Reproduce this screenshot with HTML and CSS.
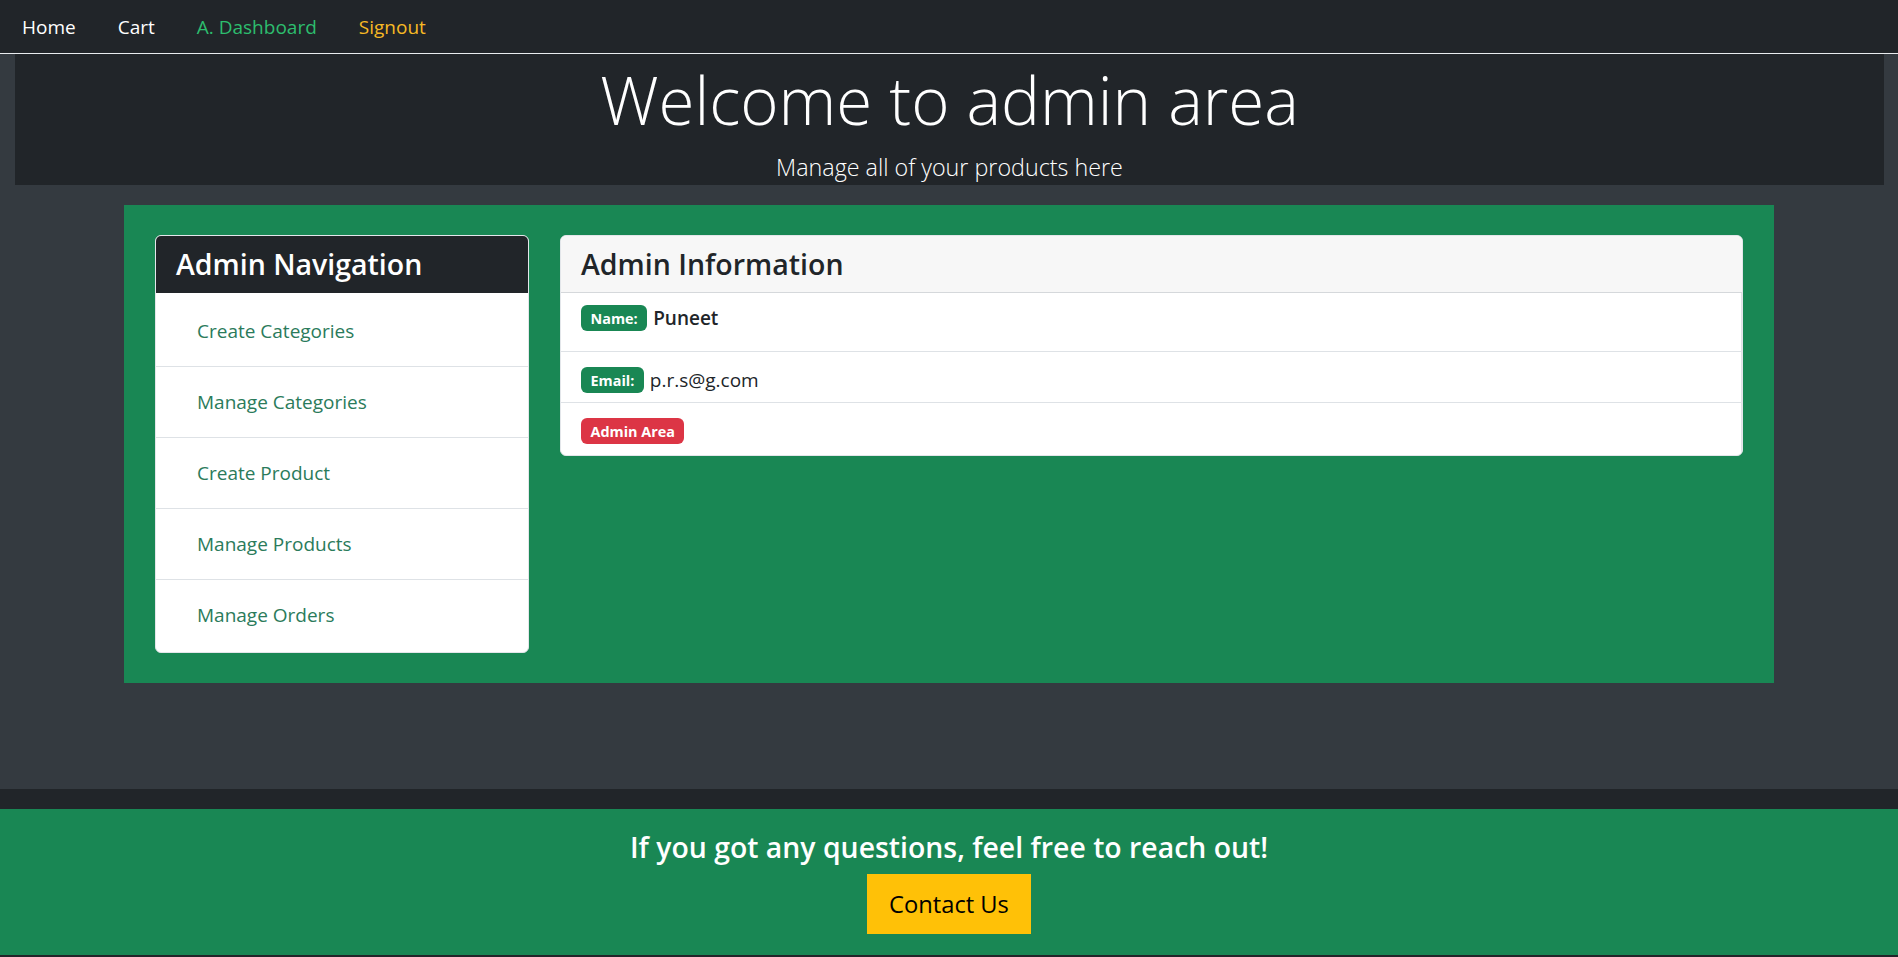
FILE: index.html
```html
<!DOCTYPE html>
<html lang="en">
<head>
<meta charset="utf-8">
<title>Admin Dashboard</title>
<link rel="stylesheet" href="styles.css">
</head>
<body>
<nav class="topnav">
  <a class="topnav-link" href="#">Home</a>
  <a class="topnav-link" href="#">Cart</a>
  <a class="topnav-link is-active" href="#">A. Dashboard</a>
  <a class="topnav-link is-warning" href="#">Signout</a>
</nav>
<div class="page">
  <header class="hero">
    <h1 class="hero-title">Welcome to admin area</h1>
    <p class="hero-lead">Manage all of your products here</p>
  </header>
  <main class="panel">
    <aside class="card nav-card">
      <div class="card-header dark">
        <h4 class="card-title">Admin Navigation</h4>
      </div>
      <ul class="nav-list">
        <li class="nav-item"><a class="nav-item-link" href="#">Create Categories</a></li>
        <li class="nav-item"><a class="nav-item-link" href="#">Manage Categories</a></li>
        <li class="nav-item"><a class="nav-item-link" href="#">Create Product</a></li>
        <li class="nav-item"><a class="nav-item-link" href="#">Manage Products</a></li>
        <li class="nav-item"><a class="nav-item-link" href="#">Manage Orders</a></li>
      </ul>
    </aside>
    <section class="card info-card">
      <div class="card-header light">
        <h4 class="card-title">Admin Information</h4>
      </div>
      <ul class="info-list">
        <li class="info-row row-name"><span class="badge badge-success">Name:</span> <span class="info-name">Puneet</span></li>
        <li class="info-row row-email"><span class="badge badge-success">Email:</span> <span class="info-email">p.r.s@g.com</span></li>
        <li class="info-row row-role"><span class="badge badge-danger">Admin Area</span></li>
      </ul>
    </section>
  </main>
</div>
<footer class="footer">
  <h4 class="footer-title">If you got any questions, feel free to reach out!</h4>
  <a class="btn-contact" href="#">Contact Us</a>
</footer>
</body>
</html>
```

FILE: styles.css
```css
* { box-sizing: border-box; }

html, body {
  margin: 0;
  padding: 0;
  background: #212529;
  font-family: "Open Sans", "Noto Sans", "DejaVu Sans", sans-serif;
  color: #212529;
}

a { text-decoration: none; }

/* top navigation */
.topnav {
  height: 54px;
  display: flex;
  align-items: center;
  padding-left: 1px;
  background: #212529;
  border-bottom: 1px solid #e9ecef;
}
.topnav-link {
  color: #ffffff;
  font-size: 19px;
  line-height: 30px;
  padding: 0 21px;
}
.topnav-link.is-active { color: #2dbd6e; }
.topnav-link.is-warning { color: #f7b924; }

/* page body */
.page {
  background: #343a40;
  padding-bottom: 106px;
}

.hero {
  height: 131px;
  margin: 0 14px 0 15px;
  background: #212529;
  text-align: center;
  color: #ffffff;
  padding-top: 4px;
}
.hero-title {
  margin: 0 0 7px;
  font-weight: 300;
  font-size: 65.4px;
  line-height: 84px;
}
.hero-lead {
  margin: 0;
  font-weight: 300;
  font-size: 23.3px;
  line-height: 36px;
}

.panel {
  width: 1650px;
  margin: 20px auto 0;
  background: #198754;
  padding: 30px 31px 30px 31px;
  display: grid;
  grid-template-columns: 374px 1fr;
  column-gap: 31px;
  align-items: start;
}

.card {
  background: #ffffff;
  border: 1px solid #e3e6ea;
  border-radius: 6px;
  overflow: hidden;
}
.card-header {
  height: 57px;
  padding: 0 20px;
  display: flex;
  align-items: center;
  border-bottom: 1px solid #d5d8db;
}
.card-header.dark { background: #212529; color: #ffffff; border-bottom-color: #212529; }
.card-header.light { background: #f7f7f7; color: #212529; }
.card-title {
  margin: 0;
  font-size: 28.5px;
  font-weight: 600;
  line-height: 36px;
}

.nav-list, .info-list {
  list-style: none;
  margin: 0;
  padding: 0;
}
.nav-item {
  border-top: 1px solid #dee2e6;
  padding: 10px 20px;
}
.nav-item:first-child { border-top: 0; padding-top: 12.5px; }
.nav-item:last-child { padding-bottom: 12.5px; }
.nav-item-link {
  display: block;
  padding: 10px 21px;
  font-size: 19px;
  line-height: 30px;
  color: #2b7b5b;
}

.info-card .info-list {
  border-right: 1px solid #dee2e6;
}
.info-row {
  border-top: 1px solid #dee2e6;
  padding: 0 20px;
  font-size: 19px;
  line-height: 26px;
  display: flex;
  align-items: center;
  gap: 6px;
}
.info-row:first-child { border-top: 0; }
.row-name { padding-top: 12px; padding-bottom: 20px; }
.row-email { padding-top: 15px; padding-bottom: 9px; }
.row-role { padding-top: 15px; padding-bottom: 11px; }

.info-name { font-weight: 600; }
.info-email { font-weight: 400; }

.badge {
  display: inline-block;
  color: #ffffff;
  font-size: 14.4px;
  font-weight: 700;
  line-height: 15px;
  padding: 5.5px 9.5px;
  border-radius: 6px;
}
.badge-success { background: #198754; }
.badge-danger { background: #dc3545; }

/* footer */
.footer {
  margin-top: 20px;
  background: #198754;
  padding: 20px 0 21px;
  text-align: center;
}
.footer-title {
  margin: 0 0 9px;
  color: #ffffff;
  font-size: 28.4px;
  font-weight: 600;
  line-height: 36px;
}
.btn-contact {
  display: inline-block;
  vertical-align: top;
  background: #ffc107;
  color: #000000;
  font-size: 23.7px;
  line-height: 38px;
  padding: 10px 21px;
  border: 1px solid #ffc107;
}
```
